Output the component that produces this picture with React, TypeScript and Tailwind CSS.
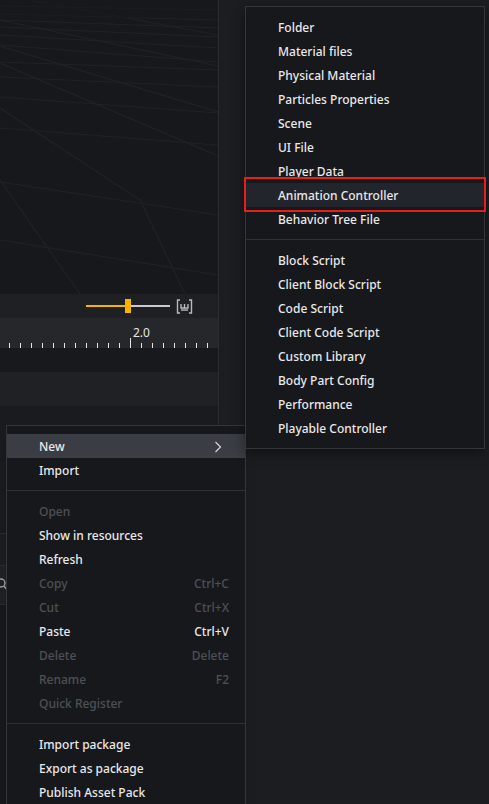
import React from 'react';

type ItemProps = {
  label: string;
  shortcut?: string;
  disabled?: boolean;
  active?: boolean;
  chevron?: boolean;
};

const MenuItem: React.FC<ItemProps> = ({ label, shortcut, disabled, active, chevron }) => (
  <div
    className={`flex h-6 items-center justify-between pl-8 pr-4 pt-px ${active ? 'bg-[#3a3d44]' : ''} ${
      disabled ? 'text-[#4e5056]' : 'text-[#e9e9ea]'
    }`}
  >
    <span>{label}</span>
    {shortcut && <span>{shortcut}</span>}
    {chevron && (
      <svg width="8" height="12" viewBox="0 0 8 12" className="mr-[7px]">
        <path d="M1.5 1 L6.5 6 L1.5 11" fill="none" stroke="#d5d6d8" strokeWidth="1.2" />
      </svg>
    )}
  </div>
);

const Separator = () => <div className="my-2 h-px bg-[#2e3035]" />;

const Viewport = () => (
  <div className="h-[294px] overflow-hidden bg-[#17181c]">
    <svg width="218" height="294" viewBox="0 0 218 294">
      <g stroke="#202227" strokeWidth="1.2" fill="none">
        <path d="M0 6 L218 10" />
        <path d="M0 14 L218 20" />
        <path d="M0 20 L218 28" />
        <path d="M0 27 L218 37" />
        <path d="M0 35 L218 48" />
        <path d="M0 45 L218 62" />
        <path d="M0 62 L218 70" />
        <path d="M0 77 L218 87" />
        <path d="M0 97 L218 113" />
        <path d="M0 128 L218 145" />
        <path d="M0 182 L218 215" />
        <path d="M0 240 L218 275" />
        <path d="M0 46 L218 112" />
        <path d="M0 20 L218 66" />
        <path d="M0 63 L218 156" />
        <path d="M0 108 L140 200 L185 294" />
        <path d="M0 180 L80 294" />
        <path d="M30 0 L218 35" />
      </g>
      <rect x="0" y="0" width="218" height="18" fill="#16171b" opacity="0.5" />
    </svg>
  </div>
);

const Ruler = () => {
  const ticks = Array.from({ length: 19 }, (_, i) => 9 + i * 11);
  return (
    <div className="relative h-[30px] bg-[#26272b]">
      <span className="absolute left-[133px] top-[6px] font-['Noto_Sans',sans-serif] text-[12px] text-[#e6e6e6]">
        2.0
      </span>
      <svg width="218" height="30" className="absolute left-0 top-0">
        {ticks.map((x, i) => (
          <line
            key={x}
            x1={x + 0.5}
            x2={x + 0.5}
            y1={i === 11 ? 20 : 25}
            y2={30}
            stroke="#e4e4e6"
            strokeWidth="1"
          />
        ))}
      </svg>
    </div>
  );
};

export default function App() {
  const main: ItemProps[] = [
    { label: 'Open', disabled: true },
    { label: 'Show in resources' },
    { label: 'Refresh' },
    { label: 'Copy', shortcut: 'Ctrl+C', disabled: true },
    { label: 'Cut', shortcut: 'Ctrl+X', disabled: true },
    { label: 'Paste', shortcut: 'Ctrl+V' },
    { label: 'Delete', shortcut: 'Delete', disabled: true },
    { label: 'Rename', shortcut: 'F2', disabled: true },
    { label: 'Quick Register', disabled: true },
  ];
  const assets = ['Folder', 'Material files', 'Physical Material', 'Particles Properties', 'Scene', 'UI File', 'Player Data'];
  const scripts = [
    'Block Script',
    'Client Block Script',
    'Code Script',
    'Client Code Script',
    'Custom Library',
    'Body Part Config',
    'Performance',
    'Playable Controller',
  ];

  return (
    <div className="relative flex h-[804px] w-[489px] overflow-hidden bg-[#1c1d21] font-['Noto_Sans',sans-serif]">
      {/* left editor column */}
      <div className="flex w-[219px] shrink-0 flex-col border-r border-[#2a2b30]">
        <Viewport />
        <div className="flex h-6 items-center bg-[#1f2024] pl-[86px]">
          <div className="relative h-[14px] w-[84px]">
            <div className="absolute left-0 top-[6px] h-[2px] w-[42px] bg-[#f7b500]" />
            <div className="absolute left-[42px] top-[6px] h-[2px] w-[42px] bg-[#c9cacd]" />
            <div className="absolute left-[39px] top-0 h-[14px] w-[6px] bg-[#f7b500]" />
          </div>
          <svg width="17" height="15" viewBox="0 0 17 15" className="ml-[6px]">
            <g fill="none" stroke="#b9babe" strokeWidth="1.4">
              <path d="M4 1 H1.5 V14 H4" />
              <path d="M13 1 H15.5 V14 H13" />
              <path d="M5 5 V9 H12 V5 M8.5 5 V9" />
              <path d="M5 11 H12" />
            </g>
          </svg>
        </div>
        <Ruler />
        <div className="h-6 bg-[#18191c]" />
        <div className="h-[34px] bg-[#202125]" />
        <div className="h-[128px] border-b border-[#2a2b30] bg-[#1a1b1f]" />
        <div className="mt-[31px] flex h-[40px] items-center border-y border-[#2a2b30] bg-[#202125]">
          <svg width="10" height="14" viewBox="0 0 10 14" className="-ml-[3px]">
            <circle cx="4" cy="5" r="4" fill="none" stroke="#9fa1a6" strokeWidth="1.4" />
            <path d="M6.8 8 L9.5 11" stroke="#9fa1a6" strokeWidth="1.5" />
          </svg>
        </div>
        <div className="flex-1 bg-[#18191c]" />
      </div>
      <div className="flex-1" />

      {/* context menu */}
      <div className="absolute left-[6px] top-[425px] w-[240px] border border-[#34363b] bg-[#17181c] pt-2 text-[12px] font-medium shadow-lg">
        <MenuItem label="New" active chevron />
        <MenuItem label="Import" />
        <Separator />
        {main.map((m) => (
          <MenuItem key={m.label} {...m} />
        ))}
        <Separator />
        <MenuItem label="Import package" />
        <MenuItem label="Export as package" />
        <MenuItem label="Publish Asset Pack" />
        <div className="h-6" />
      </div>

      {/* New submenu */}
      <div className="absolute left-[245px] top-[6px] w-[240px] border border-[#34363b] bg-[#17181c] py-2 text-[12px] font-medium shadow-[0_4px_12px_rgba(0,0,0,0.45)]">
        {assets.map((a) => (
          <MenuItem key={a} label={a} />
        ))}
        <div className="relative">
          <div className="flex h-6 items-center bg-[#22252b] pl-8 pt-px text-[#e9e9ea]">Animation Controller</div>
          <div className="pointer-events-none absolute -left-[2px] -right-[2px] -top-[6px] -bottom-[5px] border-2 border-[#e3201b]" />
        </div>
        <MenuItem label="Behavior Tree File" />
        <Separator />
        {scripts.map((s) => (
          <MenuItem key={s} label={s} />
        ))}
      </div>
    </div>
  );
}
